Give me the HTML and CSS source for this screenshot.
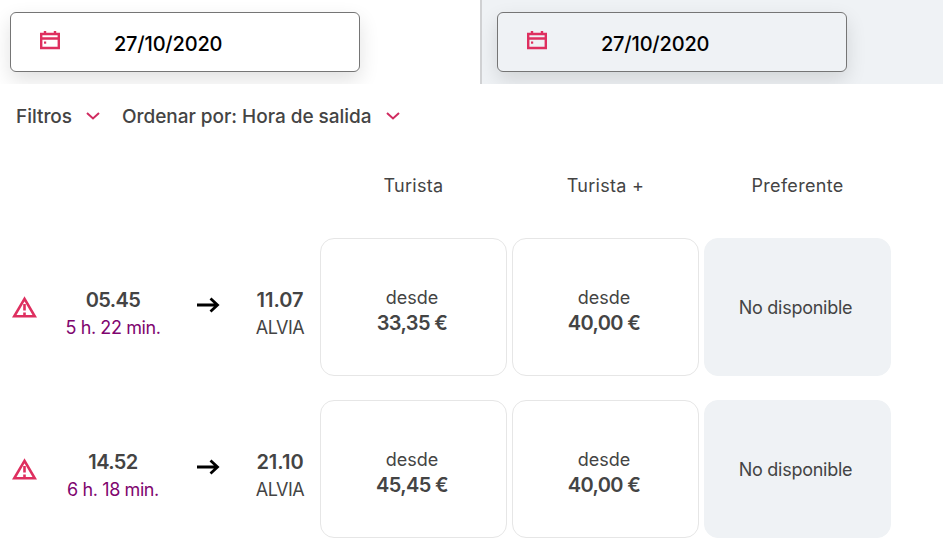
FILE: index.html
```html
<!DOCTYPE html>
<html lang="es">
<head>
    <meta charset="UTF-8">
    <title>Trenes</title>
    <link rel="stylesheet" href="styles.css">
</head>
<body>
    <div class="fechas">
        <div class="lado">
            <div class="fecha">
                <svg class="cal" viewBox="0 0 20 20"><path d="M1.2 4h17.6v14H1.2zM1.2 8.5h17.6M5 1v3M15 1v3" fill="none" stroke="#de2f5f" stroke-width="2.4"/><rect x="4" y="11.5" width="2.2" height="2.2" fill="#de2f5f"/></svg>
                <span>27/10/2020</span>
            </div>
        </div>
        <div class="lado gris">
            <div class="fecha">
                <svg class="cal" viewBox="0 0 20 20"><path d="M1.2 4h17.6v14H1.2zM1.2 8.5h17.6M5 1v3M15 1v3" fill="none" stroke="#de2f5f" stroke-width="2.4"/><rect x="4" y="11.5" width="2.2" height="2.2" fill="#de2f5f"/></svg>
                <span>27/10/2020</span>
            </div>
        </div>
    </div>

    <div class="filtros">
        <span>Filtros</span>
        <svg class="flecha" viewBox="0 0 14 8"><path d="M1 1l6 5.5L13 1" fill="none" stroke="#d02b60" stroke-width="2"/></svg>
        <span class="orden">Ordenar por: Hora de salida</span>
        <svg class="flecha" viewBox="0 0 14 8"><path d="M1 1l6 5.5L13 1" fill="none" stroke="#d02b60" stroke-width="2"/></svg>
    </div>

    <div class="clases">
        <div>Turista</div>
        <div>Turista +</div>
        <div>Preferente</div>
    </div>

    <div class="tren">
        <div class="info">
            <svg class="aviso" viewBox="0 0 25 22"><path d="M12.5 2.8L2.2 20.3h20.6zM12.5 8v6.5M12.5 16.5v3" fill="none" stroke="#de2f5f" stroke-width="2.6"/></svg>
            <div class="salida"><b>05.45</b><span class="dura">5 h. 22 min.</span></div>
            <svg class="ir" viewBox="0 0 24 16"><path d="M1 8h20M14.5 1.5L21.5 8l-7 6.5" fill="none" stroke="#000" stroke-width="2.8"/></svg>
            <div class="llegada"><b>11.07</b><span>ALVIA</span></div>
        </div>
        <div class="tarjeta">desde<b>33,35 €</b></div>
        <div class="tarjeta">desde<b>40,00 €</b></div>
        <div class="tarjeta no">No disponible</div>
    </div>

    <div class="tren">
        <div class="info">
            <svg class="aviso" viewBox="0 0 25 22"><path d="M12.5 2.8L2.2 20.3h20.6zM12.5 8v6.5M12.5 16.5v3" fill="none" stroke="#de2f5f" stroke-width="2.6"/></svg>
            <div class="salida"><b>14.52</b><span class="dura">6 h. 18 min.</span></div>
            <svg class="ir" viewBox="0 0 24 16"><path d="M1 8h20M14.5 1.5L21.5 8l-7 6.5" fill="none" stroke="#000" stroke-width="2.8"/></svg>
            <div class="llegada"><b>21.10</b><span>ALVIA</span></div>
        </div>
        <div class="tarjeta">desde<b>45,45 €</b></div>
        <div class="tarjeta">desde<b>40,00 €</b></div>
        <div class="tarjeta no">No disponible</div>
    </div>
</body>
</html>
```

FILE: styles.css
```css
body {
    margin: 0;
    font-family: Inter, "Liberation Sans", sans-serif;
    color: #444;
    background: #fff;
    overflow: hidden;
}

.fechas {
    display: flex;
    height: 84px;
}

.lado {
    width: 480px;
    padding: 12px 0 0 10px;
    box-sizing: border-box;
    overflow: hidden;
}

.lado.gris {
    flex: 1;
    padding-left: 15px;
    background: #eff2f5;
    border-left: 2px solid #d0d1d3;
}

.fecha {
    display: flex;
    width: 350px;
    height: 60px;
    box-sizing: border-box;
    padding-left: 29px;
    background: #fff;
    border: 1px solid #757575;
    border-radius: 6px;
    box-shadow: 0 8px 20px rgba(0, 0, 0, .12);
}

.gris .fecha {
    background: #eff2f5;
}

.cal {
    width: 20px;
    height: 20px;
    margin-top: 17px;
}

.fecha span {
    margin: 19px 0 0 54px;
    font-size: 20px;
    line-height: 24px;
    font-weight: 500;
    letter-spacing: -.2px;
    color: #000;
}

.filtros {
    display: flex;
    align-items: center;
    height: 24px;
    margin-top: 20px;
    padding-left: 16px;
    font-size: 19px;
    font-weight: 500;
    letter-spacing: -.03px;
}

.flecha {
    width: 14px;
    height: 8px;
    margin-left: 14px;
}

.orden {
    margin-left: 22px;
}

.clases {
    display: flex;
    gap: 5px;
    margin-top: 46px;
    padding-left: 320px;
    font-size: 18px;
    line-height: 24px;
    letter-spacing: .3px;
}

.clases div {
    width: 187px;
    text-align: center;
}

.tren {
    display: flex;
    gap: 5px;
    height: 138px;
    margin-bottom: 24px;
}

.clases + .tren {
    margin-top: 40px;
}

.info {
    display: flex;
    align-items: center;
    width: 315px;
    padding: 0 0 0 12px;
    box-sizing: border-box;
}

.aviso {
    width: 25px;
    height: 22px;
}

.salida, .llegada {
    display: flex;
    flex-direction: column;
    align-items: center;
    padding-top: 13px;
    font-size: 18px;
    line-height: 27px;
}

.salida {
    width: 102px;
    margin-left: 25px;
}

.salida b, .llegada b {
    font-size: 20px;
    font-weight: 600;
    letter-spacing: -.6px;
}

.llegada b {
    letter-spacing: 0;
}

.dura {
    color: #80056f;
    letter-spacing: -.4px;
}

.ir {
    width: 24px;
    height: 16px;
    margin: -4px 0 0 32px;
}

.llegada {
    width: 60px;
    margin-left: 30px;
    letter-spacing: -.5px;
}

.tarjeta {
    display: flex;
    flex-direction: column;
    align-items: center;
    justify-content: center;
    width: 187px;
    box-sizing: border-box;
    padding: 6px 3px 0 0;
    border: 1px solid #e6e6e6;
    border-radius: 14px;
    font-size: 18px;
    line-height: 25px;
}

.tarjeta b {
    margin-top: 1px;
    font-size: 20px;
    font-weight: 600;
    letter-spacing: -.6px;
}

.tarjeta.no {
    padding: 0 4px 0 0;
    background: #eff2f5;
    border-color: #eff2f5;
    letter-spacing: -.25px;
}
```
